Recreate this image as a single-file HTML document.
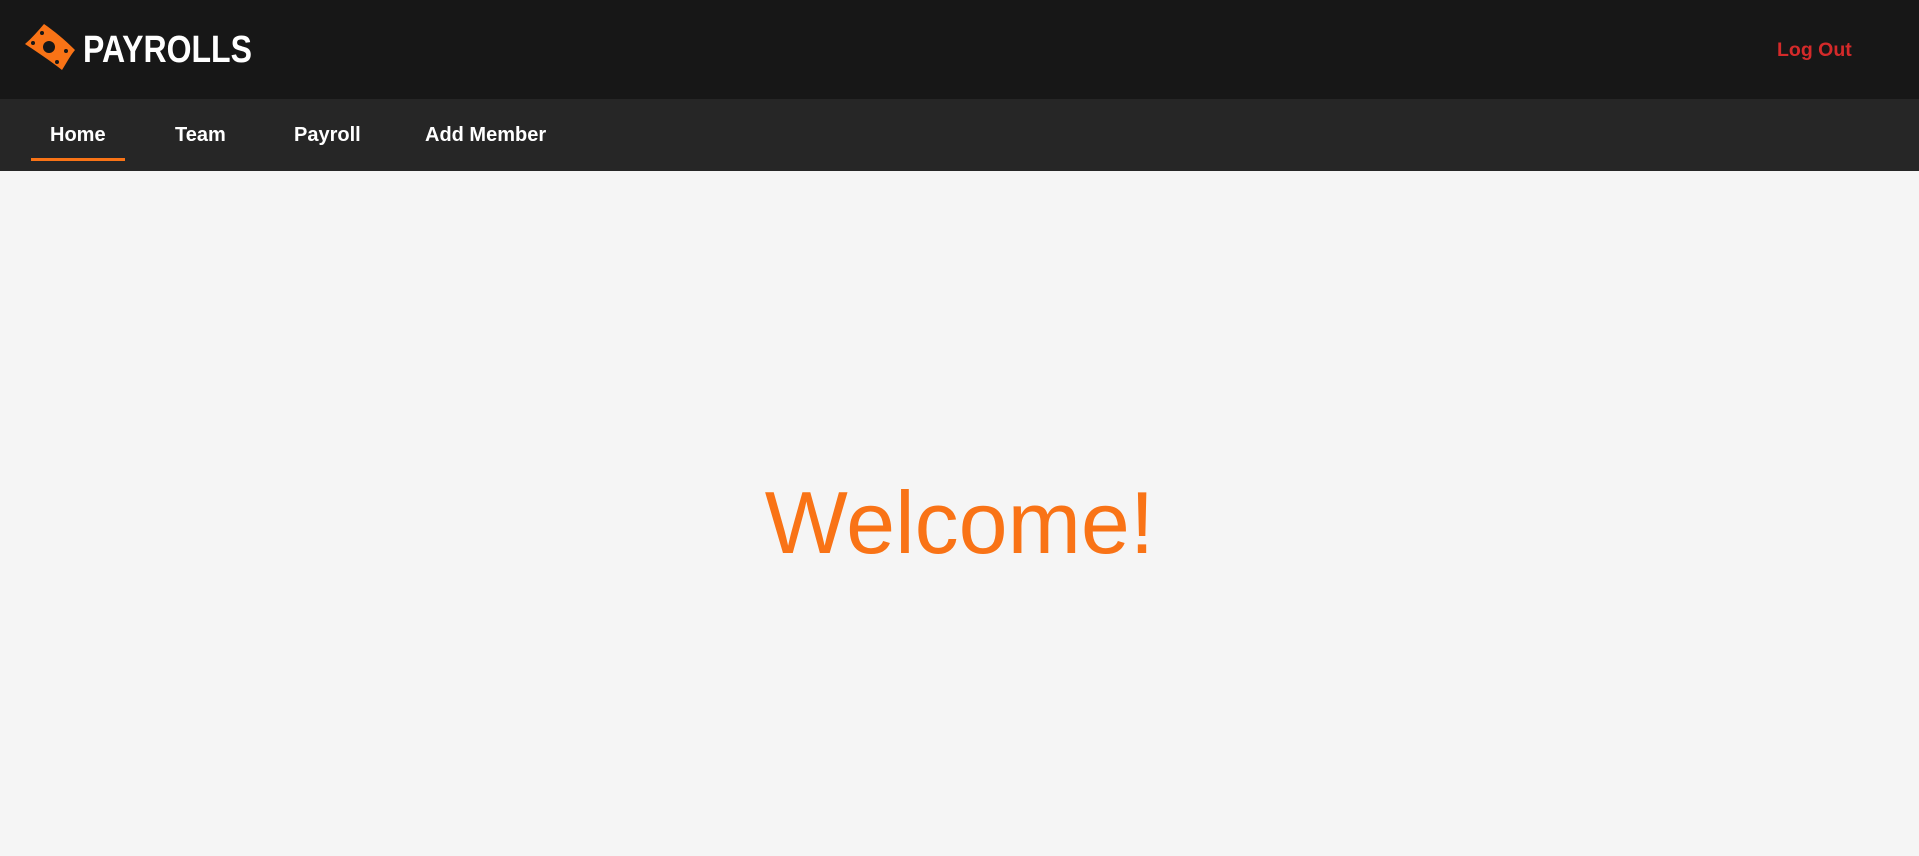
<!DOCTYPE html>
<html><head><style>
body{margin:0;width:1919px;height:856px;background:#f5f5f5;font-family:"Liberation Sans",sans-serif;overflow:hidden;position:relative}
.top{position:absolute;left:0;top:0;width:1919px;height:99px;background:#171717}
.nav{position:absolute;left:0;top:99px;width:1919px;height:72px;background:#262626}
.brand{position:absolute;left:83px;top:27px;font-size:32px;font-weight:bold;color:#fff;transform:scale(1,1.2);transform-origin:0 0}
.n{position:absolute;top:124px;font-size:20px;font-weight:bold;color:#fff;white-space:nowrap}
.ul{position:absolute;left:31px;top:158px;width:94px;height:3px;background:#f97316}
.lo{position:absolute;left:1777px;top:39px;font-size:19.5px;font-weight:bold;color:#d42a2a}
.w{position:absolute;left:0;width:1919px;top:472px;text-align:center;font-size:88px;color:#f97316}
</style></head><body>
<div class="top"></div><div class="nav"></div>
<svg style="position:absolute;left:24px;top:23px" width="52" height="48" viewBox="0 0 52 48">
<path d="M20 1 C30 8 40 16 51 27 C46 33 43 39 38 47 C28 39 16 31 1 21 C8 15 14 8 20 1Z" fill="#f97316"/>
<circle cx="25" cy="24" r="6" fill="#171717"/>
<circle cx="18" cy="10" r="2" fill="#171717"/>
<circle cx="9" cy="20" r="2" fill="#171717"/>
<circle cx="42" cy="28" r="2" fill="#171717"/>
<circle cx="33" cy="39" r="2" fill="#171717"/>
</svg>
<div class="brand">PAYROLLS</div>
<div class="n" style="left:50px">Home</div>
<div class="n" style="left:175px">Team</div>
<div class="n" style="left:294px">Payroll</div>
<div class="n" style="left:425px">Add Member</div>
<div class="ul"></div>
<div class="lo">Log Out</div>
<div class="w">Welcome!</div>
</body></html>
